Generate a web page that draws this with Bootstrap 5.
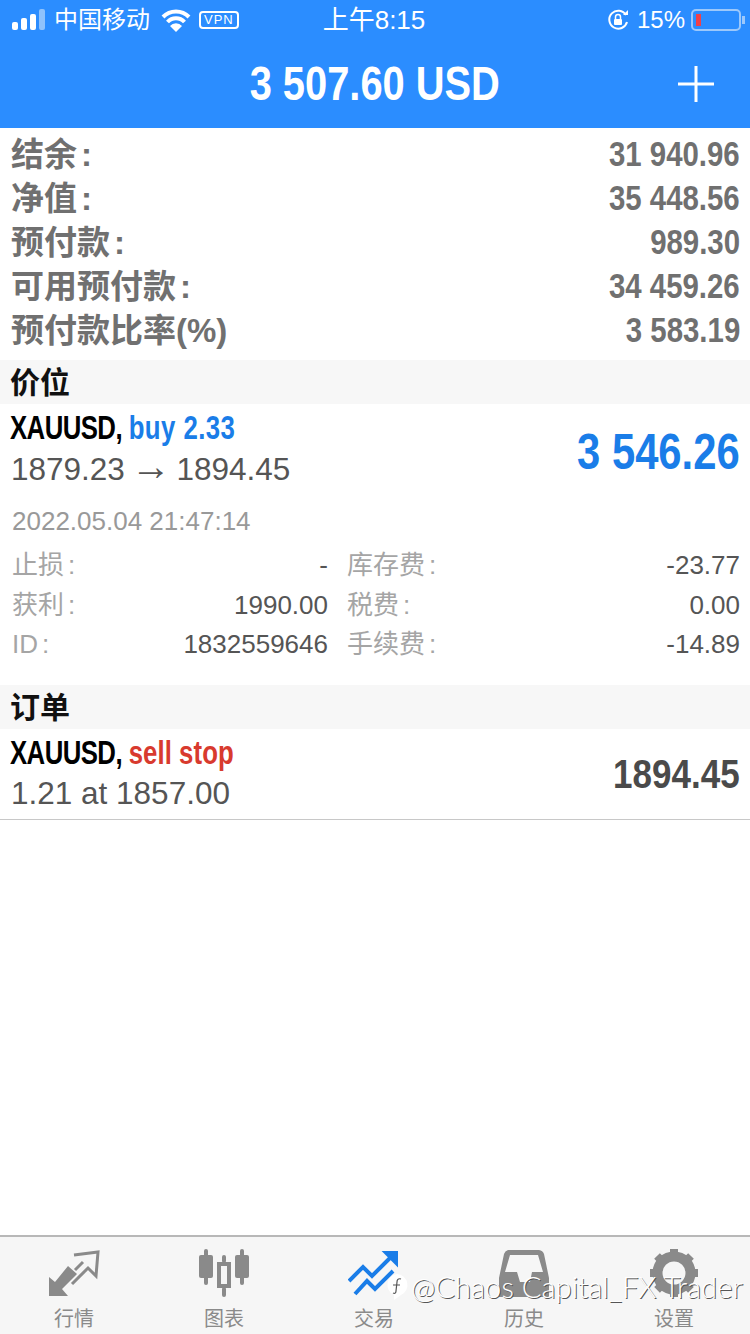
<!DOCTYPE html>
<html lang="zh-CN">
<head>
    <meta charset="UTF-8">
    <meta name="viewport" content="width=device-width, initial-scale=1.0">
    <title>交易</title>
    <link href="https://cdn.jsdelivr.net/npm/bootstrap@5.3.2/dist/css/bootstrap.min.css" rel="stylesheet">
    <script src="https://cdn.jsdelivr.net/npm/bootstrap@5.3.2/dist/js/bootstrap.bundle.min.js"></script>
    <style>
        body {
            width: 750px;
            height: 1334px;
            overflow: hidden;
            font-family: "Liberation Sans", "Noto Sans CJK SC", sans-serif;
            color: #555;
        }

        /* no narrow bold font here, so squeeze the bold one */
        .squeeze {
            display: inline-block;
            font-weight: 700;
            white-space: nowrap;
            transform-origin: right center;
        }

        .app-top {
            height: 128px;
            background: #2b8dff;
            color: #fff;
        }

        .status-bar {
            height: 40px;
            padding: 0 5px 0 12px;
            font-size: 24px;
            line-height: 40px;
        }

        .status-side {
            width: 290px;
        }

        .clock-text {
            font-size: 26px;
            margin-right: 9px;
        }

        .wifi-mark {
            margin-left: 11px;
        }

        .vpn-tag {
            font-size: 13px;
            line-height: 14px;
            border: 2px solid #fff;
            border-radius: 4px;
            padding: 0 3px;
            margin-left: 8px;
            letter-spacing: 1px;
        }

        .batt {
            width: 50px;
            height: 22px;
            border: 2px solid #9cc8fb;
            border-radius: 5px;
            padding: 3px;
            margin-left: 6px;
        }

        .batt-fill {
            width: 5px;
            height: 100%;
            background: #f0404a;
        }

        .batt-nub {
            width: 3px;
            height: 8px;
            background: #9cc8fb;
            margin-left: 1px;
        }

        .title-bar {
            height: 88px;
            padding-right: 36px;
        }

        .title-val {
            font-size: 48px;
            line-height: 88px;
        }

        .title-val .squeeze {
            transform: scaleX(.83);
            transform-origin: center;
        }

        .title-bar svg {
            margin-left: auto;
        }

        .summary {
            padding: 5px 10px 7px 11px;
        }

        .sum-row {
            height: 44px;
            font-size: 33px;
            line-height: 44px;
            font-weight: 700;
            color: #707070;
        }

        .sum-row .squeeze {
            font-size: 35px;
            margin-top: -1px;
            transform: scaleX(.84);
        }

        .colon-gap {
            margin-left: 4px;
        }

        .sect-head {
            height: 44px;
            line-height: 46px;
            background: #f7f7f7;
            padding-left: 10px;
            font-size: 30px;
            font-weight: 700;
            color: #111;
        }

        .trade-row {
            padding: 0 10px;
        }

        .trade-name {
            font-size: 33px;
            line-height: 47px;
            color: #000;
        }

        .trade-name .squeeze {
            letter-spacing: -.7px;
            transform: scaleX(.78);
            transform-origin: left center;
        }

        .trade-price {
            font-size: 31.5px;
            line-height: 35px;
            padding-left: 1px;
            color: #555;
        }

        .price-arrow {
            font-size: 40px;
            line-height: 30px;
            margin: 0 -3px;
        }

        .trade-big {
            font-size: 50px;
            line-height: 1;
            margin-top: 12px;
        }

        .trade-big .squeeze {
            transform: scaleX(.835);
        }

        .trade-mid {
            font-size: 40px;
            line-height: 1;
            color: #4a4a4a;
        }

        .trade-mid .squeeze {
            transform: scaleX(.875);
        }

        .tone-blue {
            color: #1a7de8;
        }

        .tone-red {
            color: #d83a2e;
        }

        .trade-name .tone-blue {
            letter-spacing: .6px;
        }

        .trade-name .tone-red {
            letter-spacing: .1px;
        }

        .stamp {
            font-size: 26px;
            line-height: 30px;
            color: #999;
            margin-top: 19px;
            padding-left: 2px;
        }

        .detail {
            margin-top: 10px;
            font-size: 26px;
            line-height: 39.500px;
            color: #555;
            padding-bottom: 20px;
        }

        .detail-lab {
            color: #a5a5a5;
        }

        .detail-left {
            width: 318px;
            padding-left: 2px;
        }

        .detail-right {
            width: 393px;
            margin-left: 19px;
        }

        .order-row {
            padding-bottom: 8px;
            border-bottom: 1px solid #c8c8c8;
        }

        .tab-bar {
            position: absolute;
            left: -1px;
            width: 752px;
            top: 1235px;
            height: 99px;
            background: #f6f6f6;
            border-top: 2px solid #b8b8b8;
        }

        .tab-item {
            width: 150px;
            font-size: 20px;
            line-height: 24px;
            color: #8a8a8a;
        }

        .tab-item svg {
            display: block;
            margin: 12px auto 10px;
        }

        .mark-over {
            position: absolute;
            left: 385px;
            top: 1269px;
            font-family: Lato, "Liberation Sans", sans-serif;
            font-size: 29.200px;
            line-height: 36px;
            font-weight: 300;
            color: #fff;
            text-shadow: 1px 1px 0 #555;
            white-space: nowrap;
        }

        .mark-over svg {
            margin-right: 2px;
        }
    </style>
</head>
<body class="position-relative">
    <div class="app-top">
        <div class="status-bar d-flex justify-content-between align-items-center">
            <div class="status-side d-flex align-items-center">
                <svg width="34" height="22" viewBox="0 0 34 22" class="me-2">
                    <rect x="0" y="13" width="6" height="8" rx="2" fill="#fff"/>
                    <rect x="9" y="9" width="6" height="12" rx="2" fill="#fff"/>
                    <rect x="18" y="5" width="6" height="16" rx="2" fill="#fff"/>
                    <rect x="27" y="0" width="6" height="21" rx="2" fill="#8fc2fc"/>
                </svg>
                <span>中国移动</span>
                <svg width="30" height="24" viewBox="0 0 30 24" class="wifi-mark">
                    <path d="M2 9a18 18 0 0 1 26 0M6.500 14a11.500 11.500 0 0 1 17 0" fill="none" stroke="#fff" stroke-width="4"/>
                    <path d="M15 24l-6-6a8 8 0 0 1 12 0z" fill="#fff"/>
                </svg>
                <span class="vpn-tag">VPN</span>
            </div>
            <div class="clock-text">上午8:15</div>
            <div class="status-side d-flex align-items-center justify-content-end">
                <svg width="22" height="24" viewBox="0 0 22 24" class="me-2">
                    <path d="M19 7a9 9 0 1 0 1 7" fill="none" stroke="#fff" stroke-width="2"/>
                    <path d="M16 7h5V2z" fill="#fff"/>
                    <rect x="7" y="11" width="8" height="6" rx="1" fill="#fff"/>
                    <path d="M8.500 11V9a2.500 2.500 0 0 1 5 0v2" fill="none" stroke="#fff" stroke-width="1.500"/>
                </svg>
                <span>15%</span>
                <div class="batt"><div class="batt-fill"></div></div>
                <div class="batt-nub"></div>
            </div>
        </div>
        <div class="title-bar d-flex align-items-center position-relative">
            <div class="title-val position-absolute start-0 end-0 text-center"><span class="squeeze">3 507.60 USD</span></div>
            <svg width="36" height="36" viewBox="0 0 36 36">
                <path d="M18 0v36M0 18h36" stroke="#fff" stroke-width="3"/>
            </svg>
        </div>
    </div>

    <div class="summary">
        <div class="sum-row d-flex justify-content-between"><span>结余<span class="colon-gap">:</span></span><span class="squeeze">31 940.96</span></div>
        <div class="sum-row d-flex justify-content-between"><span>净值<span class="colon-gap">:</span></span><span class="squeeze">35 448.56</span></div>
        <div class="sum-row d-flex justify-content-between"><span>预付款<span class="colon-gap">:</span></span><span class="squeeze">989.30</span></div>
        <div class="sum-row d-flex justify-content-between"><span>可用预付款<span class="colon-gap">:</span></span><span class="squeeze">34 459.26</span></div>
        <div class="sum-row d-flex justify-content-between"><span>预付款比率(%)</span><span class="squeeze">3 583.19</span></div>
    </div>

    <div class="sect-head">价位</div>
    <div class="trade-row">
        <div class="d-flex justify-content-between align-items-center">
            <div>
                <div class="trade-name"><span class="squeeze">XAUUSD, <span class="tone-blue">buy 2.33</span></span></div>
                <div class="trade-price">1879.23 <span class="price-arrow">→</span> 1894.45</div>
            </div>
            <div class="trade-big tone-blue"><span class="squeeze">3 546.26</span></div>
        </div>
        <div class="stamp">2022.05.04 21:47:14</div>
        <div class="detail d-flex">
            <div class="detail-left">
                <div class="d-flex justify-content-between"><span class="detail-lab">止损<span class="colon-gap">:</span></span><span>-</span></div>
                <div class="d-flex justify-content-between"><span class="detail-lab">获利<span class="colon-gap">:</span></span><span>1990.00</span></div>
                <div class="d-flex justify-content-between"><span class="detail-lab">ID<span class="colon-gap">:</span></span><span>1832559646</span></div>
            </div>
            <div class="detail-right">
                <div class="d-flex justify-content-between"><span class="detail-lab">库存费<span class="colon-gap">:</span></span><span>-23.77</span></div>
                <div class="d-flex justify-content-between"><span class="detail-lab">税费<span class="colon-gap">:</span></span><span>0.00</span></div>
                <div class="d-flex justify-content-between"><span class="detail-lab">手续费<span class="colon-gap">:</span></span><span>-14.89</span></div>
            </div>
        </div>
    </div>

    <div class="sect-head">订单</div>
    <div class="trade-row order-row">
        <div class="d-flex justify-content-between align-items-center">
            <div>
                <div class="trade-name"><span class="squeeze">XAUUSD, <span class="tone-red">sell stop</span></span></div>
                <div class="trade-price">1.21 at 1857.00</div>
            </div>
            <div class="trade-mid mt-2"><span class="squeeze">1894.45</span></div>
        </div>
    </div>

    <div class="tab-bar d-flex text-center">
        <div class="tab-item">
            <svg width="52" height="48" viewBox="0 0 52 48">
                <path d="M1 47V28l6 5 13-16 9 8-15 15 6 7z" fill="#8a8a8a"/>
                <path d="M26 6L50 3l-2 24-8-8-16 16M35 13l-8 8" fill="none" stroke="#8a8a8a" stroke-width="3"/>
            </svg>
            行情
        </div>
        <div class="tab-item">
            <svg width="52" height="48" viewBox="0 0 52 48" fill="#8a8a8a">
                <rect x="1" y="6" width="14" height="23" rx="2"/><rect x="6" y="0" width="4" height="36" rx="2"/>
                <rect x="37" y="6" width="14" height="23" rx="2"/><rect x="42" y="0" width="4" height="36" rx="2"/>
                <path d="M19 13h14v26H19zM23 17v18h6V17z" fill-rule="evenodd"/>
                <rect x="24" y="6" width="4" height="8" rx="2"/><rect x="24" y="38" width="4" height="10" rx="2"/>
            </svg>
            图表
        </div>
        <div class="tab-item tone-blue">
            <svg width="52" height="48" viewBox="0 0 52 48" fill="none" stroke="#1a7de8" stroke-width="4">
                <path d="M1 32L15 18l9 9L46 5"/>
                <path d="M36 3h13v13z" fill="#1a7de8" stroke-width="2"/>
                <path d="M7 45l12-13 8 8 18-18"/>
            </svg>
            交易
        </div>
        <div class="tab-item">
            <svg width="52" height="48" viewBox="0 0 52 48" fill="#8a8a8a">
                <path d="M10 1h31a6 6 0 0 1 5 4l5 24v19H1V29L6 5a6 6 0 0 1 4-4zM12 6L7 23h12l3 10h10l2-10h11L40 6z" fill-rule="evenodd"/>
            </svg>
            历史
        </div>
        <div class="tab-item">
            <svg width="52" height="48" viewBox="0 0 52 48">
                <circle cx="26" cy="24" r="16.500" fill="none" stroke="#8a8a8a" stroke-width="10"/>
                <path d="M26 0v48M2 24h48M9 7l34 34M43 7L9 41" stroke="#8a8a8a" stroke-width="8" stroke-dasharray="8 32"/>
            </svg>
            设置
        </div>
    </div>

    <div class="mark-over d-flex align-items-center">
        <svg width="24" height="28" viewBox="0 0 24 28">
            <path d="M12 1a11 11 0 0 1 4 21l-7 5 0-5A11 11 0 0 1 12 1z" fill="#fff"/>
            <path d="M16 6c-3-1-4 1-4 3l-1 9c0 2-1 3-3 2M8 12h7" fill="none" stroke="#555" stroke-width="1.200"/>
        </svg>
        <span>@Chaos Capital_FX Trader</span>
    </div>
</body>
</html>
